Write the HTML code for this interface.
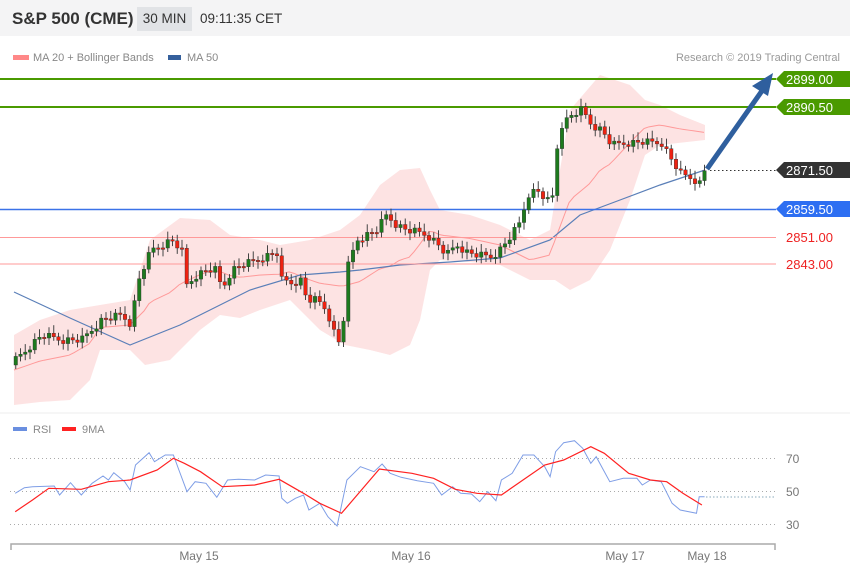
<!DOCTYPE html>
<html><head><meta charset="utf-8"><style>
body{margin:0;width:850px;height:576px;overflow:hidden;background:#fff;font-family:"Liberation Sans","DejaVu Sans",sans-serif;}
#hdr{position:absolute;left:0;top:0;width:850px;height:36px;background:#f4f4f5;}
#t1{position:absolute;left:12px;top:9px;font-size:17px;font-weight:bold;color:#333;}
#tf{position:absolute;left:137px;top:7px;width:55px;height:24px;background:#e1e3e6;font-size:13.5px;color:#333;text-align:center;line-height:24px;}
#tm{position:absolute;left:200px;top:11px;font-size:13.5px;color:#333;}
svg{position:absolute;left:0;top:0}
</style></head><body>
<svg id="s" width="850" height="576" font-family="Liberation Sans, DejaVu Sans, sans-serif">
<rect x="13" y="55" width="16" height="5" fill="#f88"/><text x="33" y="61" font-size="11" fill="#888">MA 20 + Bollinger Bands</text>
<rect x="168" y="55" width="13" height="5" fill="#35609c"/><text x="187" y="61" font-size="11" fill="#888">MA 50</text>
<text x="840" y="61" font-size="11" fill="#999" text-anchor="end">Research © 2019 Trading Central</text>
<g id="bands"></g>
<line x1="0" y1="79" x2="776" y2="79" stroke="#4a9a00" stroke-width="2"/>
<line x1="0" y1="107" x2="776" y2="107" stroke="#4a9a00" stroke-width="2"/>
<line x1="0" y1="209.5" x2="776" y2="209.5" stroke="#3b72e8" stroke-width="1.5"/>
<line x1="0" y1="237.5" x2="776" y2="237.5" stroke="#f99" stroke-width="1"/>
<line x1="0" y1="264" x2="776" y2="264" stroke="#f99" stroke-width="1"/>
<line x1="710" y1="170.5" x2="776" y2="170.5" stroke="#333" stroke-dasharray="1.5,2.5"/>
<g id="cand"></g>
<line x1="707" y1="169" x2="764" y2="88" stroke="#2f5f9e" stroke-width="5"/>
<polygon points="773,73 752,86 768,96" fill="#2f5f9e"/>
<polygon points="776,79 784,71 850,71 850,87 784,87" fill="#4a9a00"/><text x="786" y="84" font-size="13" fill="#fff">2899.00</text>
<polygon points="776,107 784,99 850,99 850,115 784,115" fill="#4a9a00"/><text x="786" y="112" font-size="13" fill="#fff">2890.50</text>
<polygon points="776,170 784,162 850,162 850,178 784,178" fill="#333"/><text x="786" y="175" font-size="13" fill="#fff">2871.50</text>
<polygon points="776,209 784,201 850,201 850,217 784,217" fill="#2e6ff2"/><text x="786" y="214" font-size="13" fill="#fff">2859.50</text>
<text x="786" y="242" font-size="13" fill="#e22">2851.00</text>
<text x="786" y="269" font-size="13" fill="#e22">2843.00</text>
<line x1="0" y1="413" x2="850" y2="413" stroke="#eee"/>
<rect x="13" y="427" width="14" height="4" fill="#6a8fe0"/><text x="33" y="433" font-size="11" fill="#888">RSI</text>
<rect x="62" y="427" width="14" height="4" fill="#f22"/><text x="82" y="433" font-size="11" fill="#888">9MA</text>
<g stroke="#aaa" stroke-dasharray="1,3"><line x1="10" y1="458.5" x2="776" y2="458.5"/><line x1="10" y1="491.5" x2="776" y2="491.5"/><line x1="10" y1="524.5" x2="776" y2="524.5"/></g>
<line x1="706" y1="497" x2="776" y2="497" stroke="#8ab" stroke-dasharray="1.5,2"/>
<g font-size="12" fill="#777"><text x="786" y="463">70</text><text x="786" y="496">50</text><text x="786" y="529">30</text></g>
<g id="rsi"></g>
<path d="M11,550 V544 H775 V550" fill="none" stroke="#aaa" stroke-width="1.5"/>
<g font-size="12" fill="#777" text-anchor="middle"><text x="199" y="560">May 15</text><text x="411" y="560">May 16</text><text x="625" y="560">May 17</text><text x="707" y="560">May 18</text></g>
</svg>
<div id="hdr"><div id="t1">S&amp;P 500 (CME)</div><div id="tf">30 MIN</div><div id="tm">09:11:35 CET</div></div>
<script>
(function(){
function P(a){return a.map(function(p){return p[0]+','+p[1]}).join(' ');}
function interp(a,x){for(var i=1;i<a.length;i++){if(x<=a[i][0]){var t=(x-a[i-1][0])/(a[i][0]-a[i-1][0]);return a[i-1][1]+t*(a[i][1]-a[i-1][1]);}}return a[a.length-1][1];}
var up=[[14,335],[40,320],[70,310],[100,305],[130,300],[150,240],[180,218],[210,220],[230,235],[260,240],[280,245],[310,240],[340,230],[360,215],[380,185],[400,170],[420,168],[430,190],[440,210],[470,215],[500,225],[530,240],[550,230],[570,110],[600,75],[630,85],[645,100],[660,105],[680,115],[705,125]];
var lo=[[14,405],[40,402],[70,400],[90,380],[100,350],[130,350],[145,365],[170,360],[200,330],[220,315],[240,318],[260,310],[290,300],[320,330],[345,345],[370,350],[390,355],[410,345],[420,320],[430,270],[440,260],[470,262],[500,265],[520,275],[530,280],[555,280],[570,290],[590,280],[610,250],[630,200],[645,155],[660,145],[705,140]];
var mid=[];for(var x=14;x<=705;x+=5){mid.push([x,(interp(up,x)+interp(lo,x))/2]);}
var ma50=[[14,292],[70,318],[130,345],[180,325],[250,290],[300,275],[340,272],[360,270],[400,265],[450,262],[500,258],[550,240],[580,215],[620,200],[660,185],[705,170]];
document.getElementById('bands').innerHTML='<polygon points="'+P(up)+' '+P(lo.slice().reverse())+'" fill="#fde3e3"/>'+
'<polyline points="'+P(mid)+'" fill="none" stroke="#f99" stroke-width="1"/>'+
'<polyline points="'+P(ma50)+'" fill="none" stroke="#5a7fb8" stroke-width="1.2"/>';
var cl=[[14,360],[40,335],[60,340],[80,340],[100,320],[120,315],[130,325],[135,285],[145,260],[150,250],[160,245],[170,240],[180,250],[185,285],[195,275],[205,270],[215,270],[220,290],[230,270],[240,265],[250,262],[260,258],[275,252],[280,280],[290,283],[300,280],[305,300],[315,300],[325,310],[335,340],[340,345],[345,270],[355,240],[365,235],[375,230],[385,215],[395,225],[405,230],[415,232],[425,235],[435,243],[445,255],[455,245],[465,252],[475,255],[490,257],[500,248],[510,235],[520,220],[525,195],[535,190],[545,200],[550,205],[555,150],[560,125],[570,115],[580,110],[590,125],[600,130],[610,145],[625,143],[640,142],[660,143],[670,160],[680,175],[690,178],[698,183],[703,170]];
var s='',prev=365,i=0;
for(var x=14;x<=703;x+=4.75){var c=interp(cl,x)+((i*37)%7-3)*1.2;var o=prev;var tp=Math.min(o,c),bt=Math.max(o,c);if(bt-tp<1.5)bt=tp+1.5;var col=c<o?'#1d7a1d':'#e21';
s+='<line x1="'+(x+1.75).toFixed(2)+'" y1="'+(tp-4-(i%3)*2).toFixed(1)+'" x2="'+(x+1.75).toFixed(2)+'" y2="'+(bt+4+(i%4)).toFixed(1)+'" stroke="#444" stroke-width="1"/><rect x="'+x.toFixed(2)+'" y="'+tp.toFixed(1)+'" width="3.5" height="'+(bt-tp).toFixed(1)+'" fill="'+col+'" stroke="#333" stroke-width="0.4"/>';prev=c;i++;}
document.getElementById('cand').innerHTML=s;
function R(a){return a.map(function(p){return (p[0]*0.542).toFixed(1)+','+(440+p[1]/3).toFixed(1)}).join(' ');}
var rb=[[28,160],[45,143],[60,140],[100,138],[110,165],[130,128],[150,165],[170,130],[190,108],[200,120],[210,98],[230,125],[240,150],[250,75],[275,38],[285,65],[305,45],[320,45],[330,90],[345,155],[360,125],[380,130],[400,172],[420,120],[440,118],[470,120],[490,105],[515,108],[520,175],[530,190],[545,175],[560,165],[570,210],[590,190],[605,230],[622,258],[640,120],[665,80],[690,95],[705,72],[720,100],[740,112],[770,122],[800,130],[815,165],[835,140],[850,160],[870,162],[885,185],[900,155],[915,182],[925,120],[945,100],[965,45],[985,45],[1005,80],[1015,110],[1025,35],[1040,8],[1060,2],[1075,25],[1090,70],[1100,50],[1125,125],[1150,115],[1175,115],[1185,135],[1200,120],[1220,125],[1240,190],[1255,210],[1285,220],[1290,170],[1300,170]];
var rr=[[28,215],[60,180],[90,145],[150,148],[200,125],[240,120],[290,90],[320,55],[340,70],[370,95],[410,140],[470,135],[515,118],[560,160],[590,190],[630,220],[700,87],[760,100],[800,115],[840,148],[880,160],[925,165],[965,120],[1005,75],[1040,60],[1090,20],[1115,40],[1160,100],[1200,120],[1230,125],[1260,160],[1295,195]];
document.getElementById('rsi').innerHTML='<polyline points="'+R(rb)+'" fill="none" stroke="#7f9ee6" stroke-width="1"/><polyline points="'+R(rr)+'" fill="none" stroke="#f22" stroke-width="1.2"/>';
})();
</script>
</body></html>
